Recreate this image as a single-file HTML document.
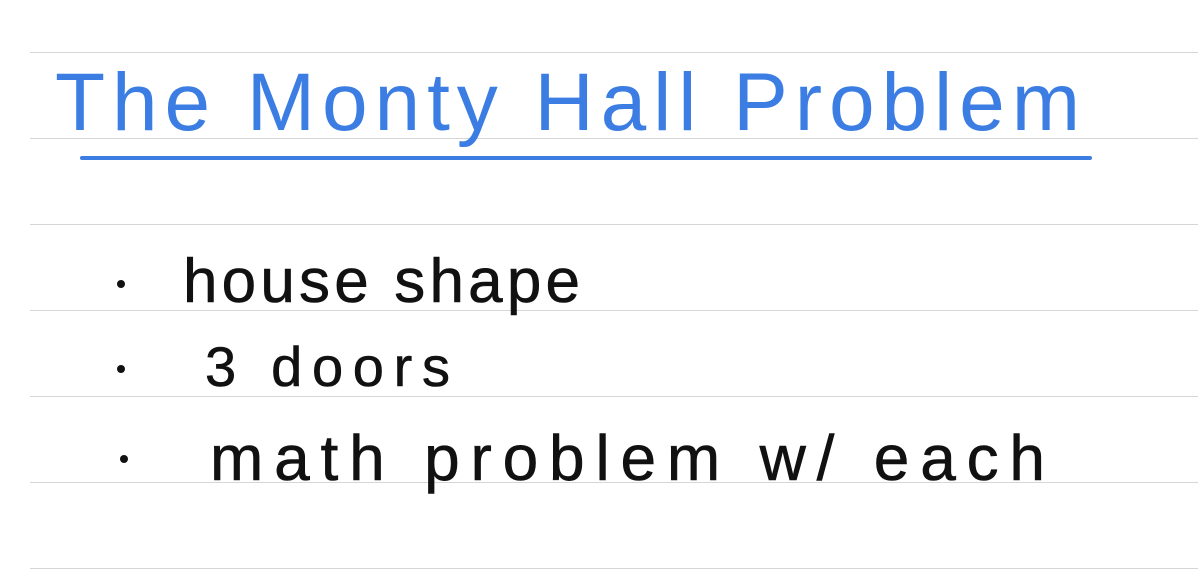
<!DOCTYPE html>
<html><head><meta charset="utf-8"><style>
html,body{margin:0;padding:0;background:#fff;width:1198px;height:580px;overflow:hidden}
svg{display:block}
</style></head><body>
<svg width="1198" height="580" viewBox="0 0 1198 580" xmlns="http://www.w3.org/2000/svg">
<g stroke="#d6d6d6" stroke-width="1">
<line x1="30" y1="52.5" x2="1198" y2="52.5"/>
<line x1="30" y1="138.5" x2="1198" y2="138.5"/>
<line x1="30" y1="224.5" x2="1198" y2="224.5"/>
<line x1="30" y1="310.5" x2="1198" y2="310.5"/>
<line x1="30" y1="396.5" x2="1198" y2="396.5"/>
<line x1="30" y1="482.5" x2="1198" y2="482.5"/>
<line x1="30" y1="568.5" x2="1198" y2="568.5"/>
</g>
<text x="55" y="130" font-family="Liberation Sans, sans-serif" font-size="82" fill="#3c7de3" textLength="1025" lengthAdjust="spacing">The Monty Hall Problem</text>
<line x1="82" y1="158" x2="1090" y2="158" stroke="#3c7de3" stroke-width="4" stroke-linecap="round"/>
<g fill="#111">
<circle cx="121" cy="284" r="4"/>
<circle cx="121" cy="369" r="4"/>
<circle cx="124" cy="459" r="4"/>
</g>
<g font-family="Liberation Sans, sans-serif" fill="#111" stroke="#111" stroke-width="0.6">
<text x="183" y="302" font-size="62" textLength="397" lengthAdjust="spacing">house shape</text>
<text x="205" y="386" font-size="56" textLength="245" lengthAdjust="spacing">3 doors</text>
<text x="210" y="480" font-size="64" textLength="835" lengthAdjust="spacing">math problem w/ each</text>
</g>
</svg>
</body></html>
